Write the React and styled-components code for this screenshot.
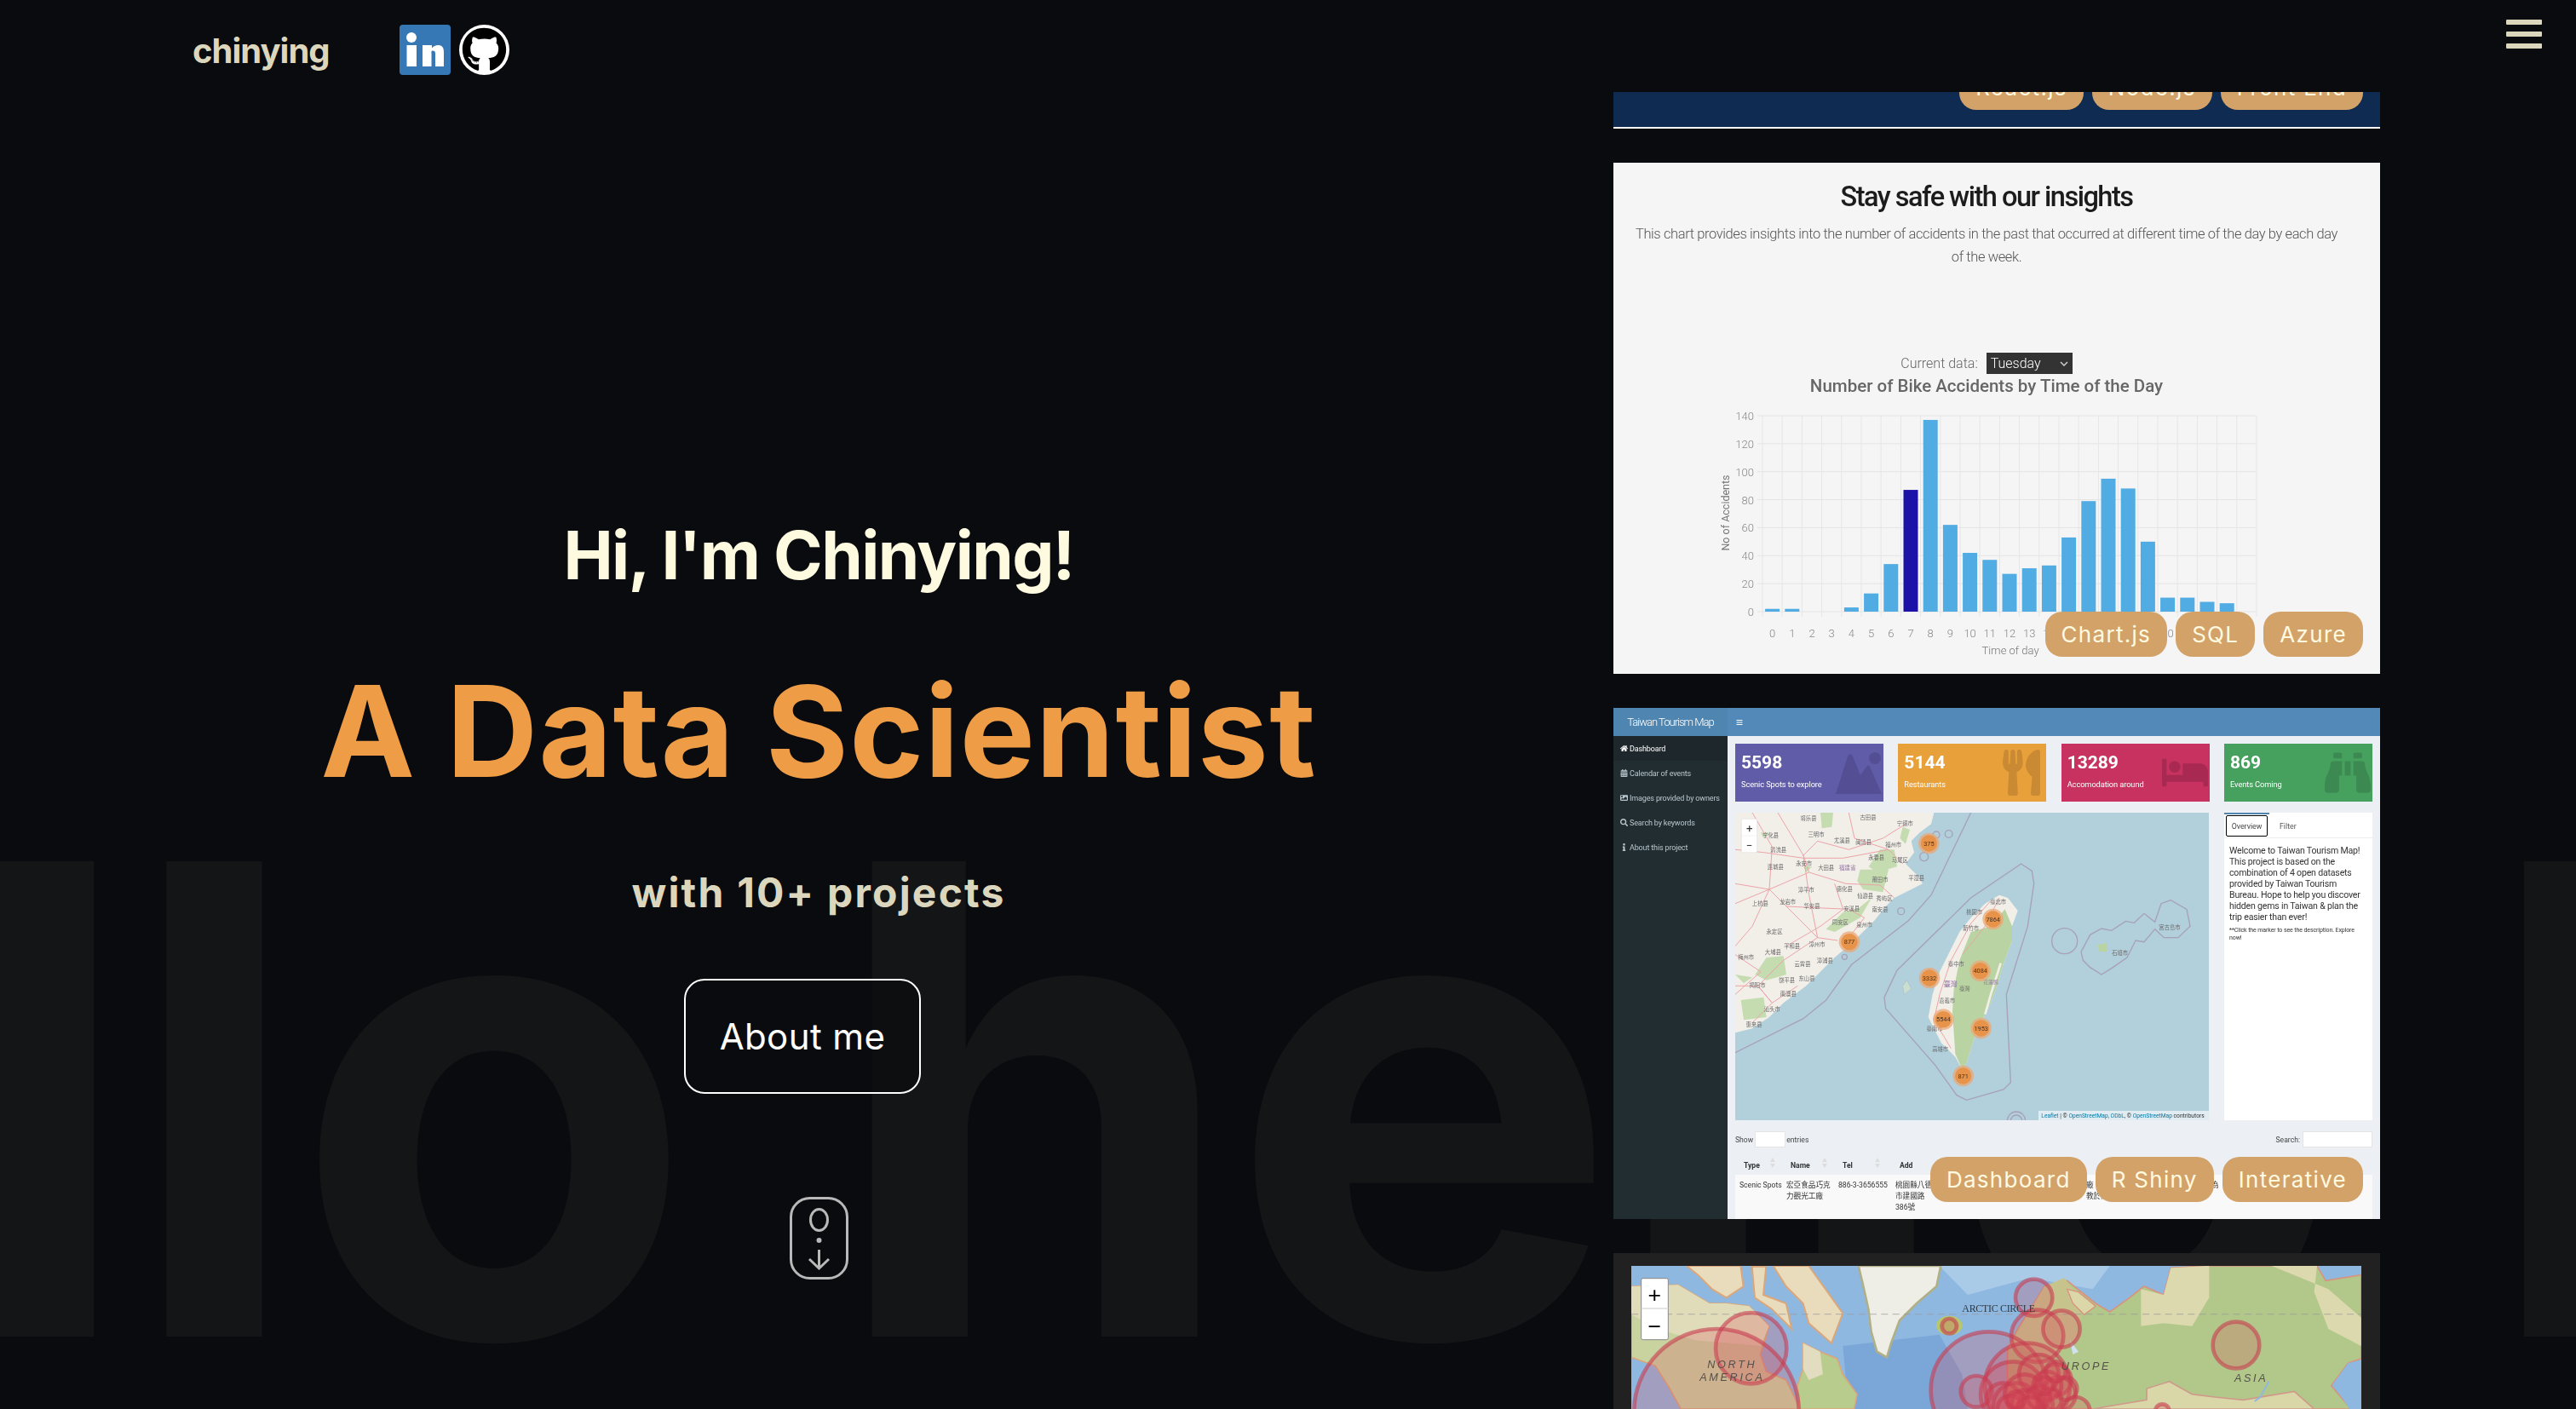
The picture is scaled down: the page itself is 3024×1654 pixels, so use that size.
import React from "react";
import styled, { createGlobalStyle } from "styled-components";
import { FaGithub, FaUtensils, FaBed, FaBinoculars, FaHome, FaCalendarAlt, FaImage, FaSearch, FaInfo, FaBars } from "react-icons/fa";

const Global = createGlobalStyle`
  html, body { margin: 0; padding: 0; background: #0a0b0e; }
  * { box-sizing: border-box; }
`;

const Page = styled.div`
  position: relative;
  width: 3024px;
  height: 1654px;
  overflow: hidden;
  background: #0a0b0e;
  font-family: Inter, "Liberation Sans", sans-serif;
  display: grid;
  grid-template-columns: 1894px 900px 230px;
`;
const BigText = styled.div`
  position: absolute;
  left: -50px;
  top: 907px;
  font-size: 767px;
  line-height: 1;
  font-weight: 700;
  letter-spacing: -10.5px;
  white-space: pre;
  color: #131517;
`;
const Nav = styled.header`
  position: absolute;
  top: 0; left: 0; right: 0;
  height: 108px;
  background: #0a0b0e;
  z-index: 5;
  display: flex;
  align-items: flex-start;
  padding: 29px 40px 0 226px;
`;
const Brand = styled.div`
  margin-top: 6px;
  font-size: 40px;
  line-height: 50px;
  font-weight: 700;
  letter-spacing: -1px;
  color: #dcd6bd;
  width: 243px;
`;
const Socials = styled.div`
  display: flex;
  gap: 10px;
`;
const GhRing = styled.div`
  width: 59px; height: 59px;
  border-radius: 50%;
  background: #fff;
  display: flex;
  align-items: center;
  justify-content: center;
  color: #000;
`;
const Burger = styled.div`
  margin-left: auto;
  margin-top: -6px;
  display: flex;
  flex-direction: column;
  gap: 8px;
  span { display: block; width: 42px; height: 6px; border-radius: 1px; background: #dcd6bd; }
`;
const Hero = styled.section`
  position: relative;
  z-index: 1;
  display: flex;
  flex-direction: column;
  align-items: center;
  padding: 613px 0 0 28px;
`;
const Hi = styled.h2`
  margin: 0;
  font-size: 78px;
  line-height: 78px;
  font-weight: 700;
  letter-spacing: -1.6px;
  color: #fefae0;
`;
const Title = styled.h1`
  margin: 94px 0 0;
  font-size: 148px;
  line-height: 148px;
  font-weight: 700;
  letter-spacing: 1.2px;
  color: #ee9c46;
`;
const Sub = styled.h3`
  margin: 91px 0 0;
  font-size: 48px;
  line-height: 48px;
  font-weight: 700;
  letter-spacing: 2.2px;
  color: #dcd6bd;
`;
const AboutBtn = styled.button`
  margin: 77px 38px 0 0;
  width: 278px;
  height: 135px;
  border: 2px solid #fff;
  border-radius: 24px;
  background: rgba(10, 11, 14, 0.7);
  color: #fff;
  font-family: inherit;
  font-size: 42px;
  font-weight: 400;
  letter-spacing: 0.4px;
`;
const MouseIcon = styled.svg`
  margin-top: 121px;
  display: block;
`;
const Column = styled.main`
  position: relative;
  z-index: 1;
  margin-top: -449px;
  display: flex;
  flex-direction: column;
  gap: 40px;
`;
const Card = styled.article`
  position: relative;
  width: 900px;
  height: 600px;
  flex: none;
  background: ${(p) => p.$bg};
  ${(p) => p.$line && "border-bottom: 2px solid #fff;"}
`;
const TagRow = styled.div`
  position: absolute;
  right: 20px;
  bottom: 20px;
  display: flex;
  gap: 10px;
  z-index: 2;
`;
const Tag = styled.span`
  height: 53px;
  padding: 0 19px;
  border-radius: 20px;
  background: #d3a269;
  color: #fefae0;
  font-size: 26px;
  line-height: 53px;
  letter-spacing: 1.3px;
  white-space: nowrap;
`;
const Shot = styled.div`
  width: 100%;
  height: 100%;
  overflow: hidden;
  filter: blur(0.45px);
  font-family: Roboto, "Liberation Sans", sans-serif;
`;
const SafeShot = styled(Shot)`
  display: flex;
  flex-direction: column;
  align-items: center;
  padding: 24px 24px 0 0;
`;
const SafeTitle = styled.div`
  font-size: 32.5px;
  line-height: 32px;
  font-weight: 500;
  letter-spacing: -1.5px;
  color: #1c1c1c;
`;
const SafePara = styled.p`
  margin: 14px 0 0;
  width: 830px;
  text-align: center;
  font-size: 16.5px;
  line-height: 27px;
  font-weight: 300;
  letter-spacing: -0.4px;
  color: #555;
`;
const DataRow = styled.div`
  margin-top: 99px;
  height: 25px;
  display: flex;
  align-items: center;
  gap: 10px;
  font-size: 16px;
  color: #666;
  font-weight: 300;
`;
const FakeSelect = styled.span`
  width: 101px;
  height: 25px;
  padding: 0 5px;
  background: #333;
  color: #fff;
  display: flex;
  align-items: center;
  justify-content: space-between;
  font-size: 16px;
`;
const ChartTitle = styled.div`
  margin-top: 2px;
  font-size: 20.5px;
  line-height: 24px;
  font-weight: 500;
  color: #666;
`;
const ChartSvg = styled.svg`
  margin-top: 4px;
  flex: none;
  display: block;
`;

const Dash = styled(Shot)`
  display: grid;
  grid-template-columns: 134px 1fr;
  grid-template-rows: 33px 1fr;
`;
const DashLogo = styled.div`
  background: #4f86b1;
  color: #fff;
  font-size: 13px;
  font-weight: 300;
  letter-spacing: -1px;
  line-height: 33px;
  text-align: center;
`;
const DashBar = styled.div`
  background: #5289b8;
  color: #fff;
  display: flex;
  align-items: center;
  padding-left: 10px;
`;
const Side = styled.nav`
  background: #222d32;
  color: #b8c7ce;
`;
const SideItem = styled.div`
  height: 29px;
  padding-left: 8px;
  display: flex;
  align-items: center;
  gap: 2px;
  font-size: 9px;
  letter-spacing: -0.15px;
  background: ${(p) => (p.$active ? "#1e282c" : "transparent")};
  color: ${(p) => (p.$active ? "#fff" : "#b8c7ce")};
`;
const DashMain = styled.div`
  background: #ecf0f5;
  padding: 9px 9px 0;
  overflow: hidden;
`;
const InfoRow = styled.div`
  display: grid;
  grid-template-columns: repeat(4, 174px);
  justify-content: space-between;
`;
const InfoBox = styled.div`
  position: relative;
  height: 68px;
  padding: 9px 7px;
  background: ${(p) => p.$bg};
  color: #fff;
  overflow: hidden;
`;
const InfoNum = styled.div`
  font-size: 21px;
  line-height: 26px;
  font-weight: 700;
`;
const InfoLabel = styled.div`
  margin-top: 6px;
  font-size: 9.3px;
  line-height: 14px;
  letter-spacing: -0.1px;
`;
const InfoIcon = styled.div`
  position: absolute;
  right: 2px;
  top: 7px;
  color: ${(p) => p.$c};
  line-height: 0;
`;
const MapRow = styled.div`
  margin-top: 13px;
  display: grid;
  grid-template-columns: 556px 174px;
  justify-content: space-between;
  height: 361px;
`;
const TabBox = styled.div`
  position: relative;
  background: #fff;
`;
const TabBlue = styled.div`
  width: 53px;
  height: 2px;
  background: #4f86b1;
`;
const TabHead = styled.div`
  height: 28px;
  display: flex;
  align-items: center;
  font-size: 8.8px;
  color: #555;
  border-bottom: 1px solid #eee;
  padding-left: 2px;
`;
const TabOn = styled.span`
  width: 49px;
  height: 25px;
  border: 1px solid #000;
  border-radius: 2px;
  display: flex;
  align-items: center;
  justify-content: center;
  margin-right: 14px;
  color: #444;
`;
const TabBody = styled.div`
  padding: 8px 5px 0 6px;
  font-size: 10.6px;
  line-height: 13px;
  letter-spacing: -0.2px;
  color: #333;
`;
const TabNote = styled.div`
  margin-top: 5px;
  font-size: 7px;
  line-height: 8.6px;
  letter-spacing: -0.1px;
`;
const Tools = styled.div`
  margin-top: 13px;
  height: 19px;
  display: flex;
  align-items: center;
  font-size: 8.6px;
  color: #444;
`;
const SelectBox = styled.span`
  width: 36px;
  height: 19px;
  margin: 0 1px 0 2px;
  background: #fff;
  border: 1px solid #e4e4e4;
`;
const SearchBox = styled.span`
  width: 82px;
  height: 19px;
  margin-left: 3px;
  background: #fff;
  border: 1px solid #e4e4e4;
`;
const Spacer = styled.span` flex: 1; `;
const TableGrid = styled.div`
  display: grid;
  grid-template-columns: 55px 61px 67px 224px 147px 1fr;
  padding: ${(p) => p.$pt || 0}px 0 0 5px;
  background: ${(p) => p.$bg || "transparent"};
  margin-top: ${(p) => p.$mt || 0}px;
  height: ${(p) => p.$h}px;
  font-size: ${(p) => p.$fs}px;
  font-weight: ${(p) => p.$w || 400};
  line-height: ${(p) => p.$lh}px;
  color: #333;
  font-family: Roboto, "Noto Sans CJK TC", sans-serif;
  overflow: hidden;
`;
const HeadCell = styled.span`
  padding-left: 5px;
`;

const WorldFrame = styled.div`
  padding: 15px 22px 0 21px;
  height: 100%;
  filter: blur(0.5px);
`;
const Fill = styled.svg`
  display: block;
`;

const bars = [2, 2, 0, 0, 3, 13, 34, 87, 137, 62, 42, 37, 27, 31, 33, 53, 79, 95, 88, 50, 10, 10, 7, 6];

function Chart() {
  const x0 = 175, y0 = 249, slot = 23.2, unit = 230 / 140;
  return (
    <ChartSvg width="876" height="310" viewBox="0 0 876 310" fontFamily="Roboto, sans-serif">
      {[0, 20, 40, 60, 80, 100, 120, 140].map((v) => (
        <g key={v}>
          <line x1={x0 - 6} x2={x0 + slot * 25} y1={y0 - v * unit} y2={y0 - v * unit} stroke="#e4e4e4" />
          <text x={x0 - 10} y={y0 - v * unit + 5} textAnchor="end" fontSize="13" fill="#888" fontWeight="300">{v}</text>
        </g>
      ))}
      {Array.from({ length: 26 }, (_, i) => (
        <line key={i} x1={x0 + i * slot} x2={x0 + i * slot} y1={y0 - 230} y2={y0 + 6} stroke="#e6e6e6" />
      ))}
      {bars.map((v, i) => (
        <rect key={i} x={x0 + i * slot + 3.1} y={y0 - v * unit} width="17" height={v * unit} fill={i === 7 ? "#1d12a8" : "#52ace4"} />
      ))}
      {Array.from({ length: 25 }, (_, i) => (
        <text key={i} x={x0 + i * slot + 11.6} y={y0 + 30} textAnchor="middle" fontSize="13" fill="#888" fontWeight="300">{i}</text>
      ))}
      <text x="466" y="299" textAnchor="middle" fontSize="13" fill="#777" fontWeight="300">Time of day</text>
      <text transform="translate(136,133) rotate(-90)" textAnchor="middle" fontSize="12.5" fill="#777">No of Accidents</text>
    </ChartSvg>
  );
}

const clusters = [
  [908, 375, "7864"], [402, 455, "877"], [682, 108, "375"], [863, 557, "4084"],
  [684, 582, "3332"], [733, 728, "5544"], [866, 759, "1953"], [803, 927, "871"],
];
const cityLabels = [
  ["宁德市", 598, 46], ["三明市", 285, 83], ["福州市", 557, 121], ["莆田市", 510, 244], ["泉州市", 455, 401],
  ["漳州市", 288, 470], ["龙岩市", 185, 320], ["揭阳市", 78, 616], ["汕头市", 130, 698], ["梅州市", 38, 515],
  ["马尾区", 580, 173], ["永春县", 497, 165], ["大田县", 320, 200], ["永安市", 242, 185], ["德化县", 385, 275],
  ["仙游县", 458, 300], ["安溪县", 410, 345], ["同安区", 370, 392], ["南安县", 510, 348], ["平和县", 200, 478],
  ["大埔县", 133, 499], ["云霄县", 237, 541], ["漳浦县", 316, 527], ["东山县", 252, 590], ["饶平县", 182, 598],
  ["南澳县", 187, 645], ["惠来县", 66, 754], ["上杭县", 88, 327], ["漳平市", 250, 280], ["华安县", 270, 336],
  ["连城县", 142, 197], ["清流县", 152, 138], ["宁化县", 125, 87], ["尤溪县", 376, 106], ["闽清县", 452, 112],
  ["将乐县", 258, 27], ["古田县", 468, 24], ["平潭县", 638, 238], ["永定区", 138, 425], ["秀屿区", 525, 308],
  ["臺北市", 926, 322], ["桃園市", 842, 357], ["新竹市", 830, 413], ["臺中市", 778, 540], ["嘉義市", 746, 668],
  ["臺南市", 702, 768], ["高雄市", 722, 840], ["臺灣", 808, 627], ["石垣市", 1355, 500], ["宮古島市", 1530, 410],
];
const roads = [
  "M0 320L120 270L260 210L240 150L290 100L400 130L520 90L600 40",
  "M0 130L100 140L240 160L380 160L540 130",
  "M120 270L180 330L290 440L360 450",
  "M60 0L130 120L120 270L60 400L0 470",
  "M290 440L170 520L80 610L130 670L60 740",
  "M260 210L390 250L510 255L560 300",
  "M180 330L400 340L455 370L400 440",
  "M0 610L80 610L130 670L220 610",
  "M150 0L240 150L260 290L290 440",
  "M400 0L420 90L540 130L590 180",
  "M0 250L120 270M0 500L90 560L0 640",
  "M350 250L380 340L300 400L180 470",
];

function TaiwanMap() {
  return (
    <Fill width="556" height="361" viewBox="0 0 1668 1083" fontFamily="'Noto Sans CJK SC', sans-serif">
      <rect width="1668" height="1083" fill="#b1d0dc" />
      <path d="M0 0L700 0L690 40L650 70L620 100L630 140L600 180L640 220L660 250L620 270L560 300L530 330L490 380L440 430L410 460L350 510L300 560L250 610L210 640L170 670L120 720L60 760L0 775Z" fill="#f2efe9" />
      <path d="M300 0L345 0L340 50L305 55ZM590 50L615 60L600 110L580 90ZM510 130L560 130L570 190L500 210L470 190ZM440 200L540 200L520 280L450 270L430 240ZM380 350L430 340L480 300L440 370L350 420L320 410ZM110 510L170 505L180 570L110 590L70 570ZM20 660L100 650L110 720L30 730ZM0 570L60 580L30 600ZM90 70L120 70L100 90ZM240 190L270 190L250 210Z" fill="#c4dcb0" />
      <g fill="none" stroke="#eda3a8" strokeWidth="3">{roads.map((d) => <path key={d} d={d} />)}</g>
      <path d="M930 290L960 300L995 345L975 400L975 450L945 530L925 600L900 670L870 730L840 800L815 880L800 905L775 860L725 810L680 720L695 640L720 560L745 510L790 420L830 370L880 320Z" fill="#f2efe9" />
      <path d="M950 340L975 400L975 450L945 530L925 600L900 670L870 730L840 800L815 880L800 905L775 850L765 700L770 620L790 520L830 420L900 400Z" fill="#b9d4a2" />
      <path d="M935 530L900 640L880 710" stroke="#f2efe9" strokeWidth="8" fill="none" />
      <g fill="none" stroke="#eda3a8" strokeWidth="3"><path d="M900 310L830 390L760 520L720 640L700 730L760 830" /><path d="M930 300L880 400L800 500" /></g>
      <g fill="none" stroke="#a7a0ba" strokeWidth="4">
        <path d="M830 0L690 290L610 380L410 535L320 660L240 725L0 845" />
        <path d="M1007 180L1045 205L1052 250L1030 400L955 640L970 950L945 975L815 1012L780 995L705 890L530 690L525 650L570 555L830 300Z" />
        <circle cx="708" cy="78" r="12" /><circle cx="752" cy="75" r="13" /><circle cx="665" cy="155" r="15" />
        <circle cx="584" cy="347" r="12" /><circle cx="385" cy="508" r="9" /><circle cx="1160" cy="452" r="45" />
        <path d="M1250 545L1225 520L1218 490L1250 430L1290 408L1325 415L1375 382L1405 388L1440 355L1478 385L1500 320L1534 308L1590 340L1602 400L1560 440L1510 440L1478 410L1440 455L1410 450L1380 510L1330 545L1290 570Z" />
        <circle cx="990" cy="1085" r="32" /><circle cx="990" cy="1085" r="20" />
      </g>
      <path d="M1275 465L1310 460L1310 490L1280 488Z" fill="#b9d4a2" />
      <path d="M605 590L620 620L595 640L590 610Z" fill="#c9dfd0" stroke="#a7a0ba" />
      <g fontSize="19" fill="#6a6a6a" textAnchor="middle">
        {cityLabels.map(([t, x, y]) => <text key={t} x={x} y={y}>{t}</text>)}
      </g>
      <text x="395" y="200" fontSize="20" fill="#9a7fa8" textAnchor="middle">福建省</text>
      <text x="758" y="612" fontSize="24" fill="#8a6a9e" textAnchor="middle">臺灣</text>
      <text x="900" y="602" fontSize="18" fill="#9a7fa8" textAnchor="middle">花蓮縣</text>
      {clusters.map(([x, y, t]) => (
        <g key={t}>
          <circle cx={x} cy={y} r="37" fill="#e9a878" fillOpacity="0.75" />
          <circle cx={x} cy={y} r="29" fill="#e8934a" />
          <text x={x} y={y + 8} fontSize="22" fontFamily="Roboto, sans-serif" fill="#4a3320" textAnchor="middle">{t}</text>
        </g>
      ))}
      <rect x="22" y="22" width="55" height="118" rx="4" fill="#fff" stroke="#ccc" />
      <line x1="22" x2="77" y1="81" y2="81" stroke="#ddd" />
      <text x="50" y="70" fontSize="40" textAnchor="middle" fontFamily="Roboto, sans-serif" fill="#333">+</text>
      <text x="50" y="128" fontSize="40" textAnchor="middle" fontFamily="Roboto, sans-serif" fill="#333">−</text>
      <rect x="1068" y="1050" width="600" height="33" fill="#fff" fillOpacity="0.6" />
      <text x="1078" y="1075" fontSize="20" fontFamily="Roboto, sans-serif" fill="#0078a8">Leaflet<tspan fill="#333"> | © </tspan>OpenStreetMap, ODbL<tspan fill="#333">, © </tspan>OpenStreetMap<tspan fill="#333"> contributors</tspan></text>
    </Fill>
  );
}

const rings = [
  [437, 308, 125], [315, 530, 290], [1135, 230, 26],
  [1433, 130, 65], [1445, 265, 92], [1530, 240, 65], [1275, 455, 205], [1410, 440, 150], [1360, 470, 115],
  [1230, 460, 55], [1325, 490, 60], [1510, 420, 55], [1545, 450, 40], [1450, 400, 70], [1370, 510, 80],
  [1440, 510, 60], [1520, 470, 60], [1580, 530, 50], [1885, 530, 25], [2145, 297, 82], [1400, 470, 70], [1480, 440, 50],
  [1350, 520, 45], [1400, 500, 45], [1450, 480, 40], [1490, 490, 40], [1420, 530, 50], [1510, 390, 35], [1370, 490, 30], [1470, 440, 30],
];

function WorldMap() {
  return (
    <Fill width="857" height="168" viewBox="15 18 2571 504" fontFamily="'Liberation Serif', serif">
      <rect x="15" y="18" width="2571" height="504" fill="#8fb8e0" />
      <path d="M760 300L1100 260L1180 400L1200 522L780 522Z" fill="#7ba6d8" />
      <path d="M1100 18L1700 18L1640 100L1420 60L1200 120Z" fill="#a9cbe8" />
      <path d="M15 90L180 85L290 150L350 150L430 160L500 230L470 330L490 390L560 420L610 522L190 522L150 450L100 370L15 340Z" fill="#c9d3a0" stroke="#dba77a" strokeWidth="5" />
      <path d="M15 90L180 85L290 150L350 150L430 160L500 230L470 300L240 280L110 240L15 190Z" fill="#e0dbb8" />
      <path d="M620 290L680 320L740 345L760 400L810 470L800 522L610 522L600 440L620 380Z" fill="#b8cc8e" stroke="#dba77a" strokeWidth="5" />
      <path d="M620 290L680 320L690 400L640 420L620 380Z" fill="#e2dcc0" />
      <path d="M210 18L400 18L410 90L350 130L300 100L250 50ZM440 20L490 20L480 120L560 150L580 240L510 170L450 130ZM515 18L640 18L760 185L720 290L640 220L620 150L560 90Z" fill="#e8dcbc" stroke="#dba77a" strokeWidth="6" />
      <path d="M815 18L1105 18L1090 90L1020 150L960 210L930 290L915 340L880 320L860 250L850 170L830 80Z" fill="#efeee6" stroke="#b0b088" strokeWidth="8" />
      <ellipse cx="1135" cy="228" rx="46" ry="34" fill="#b7c76e" />
      <g transform="translate(1170 0)">
        <path d="M170 310L200 250L300 90L380 70L480 150L530 180L600 130L650 90L720 120L745 25L860 18L1260 18L1290 70L1415 50L1415 345L1370 360L1310 440L1380 522L170 522Z" fill="#b2c88a" stroke="#d8937f" strokeWidth="5" />
        <path d="M640 100L720 120L745 25L880 18L880 130L820 230L720 220L640 230Z M1100 18L1260 18L1250 110L1300 240L1415 300L1415 200L1300 100Z" fill="#dcd9ae" />
        <path d="M180 300L240 190L300 90L370 60L400 100L420 110L430 200L410 280L330 340Z" fill="#c6c48c" />
        <path d="M380 100L420 110L480 160L440 190L400 150Z" fill="#dcd7a8" stroke="#d8937f" strokeWidth="4" />
        <path d="M1415 350L1370 360L1315 435L1375 522L1415 522Z" fill="#8fb8e0" />
        <path d="M470 522L540 510L660 490L660 450L740 425L820 470L900 480L1000 490L1180 460L1250 522Z" fill="#d9d6a8" stroke="#cf9a8a" strokeWidth="5" />
        <path d="M390 280L400 330L420 320Z" fill="#cfe0f0" />
        <path d="M1090 425L1060 480L1040 495" stroke="#8fb8e0" strokeWidth="6" fill="none" />
      </g>
      <line x1="15" x2="2586" y1="188" y2="188" stroke="#999" strokeOpacity="0.6" strokeWidth="4" strokeDasharray="24 16" />
      <g fill="rgba(215,80,90,0.25)" stroke="rgba(200,60,80,0.6)" strokeWidth="14">
        {rings.map(([x, y, r], i) => <circle key={i} cx={x} cy={y} r={r} />)}
      </g>
      <text x="1180" y="180" fontSize="36" fill="#2f3a44" letterSpacing="-1">ARCTIC CIRCLE</text>
      <g fontSize="38" fontStyle="italic" fill="#55504c" textAnchor="middle" letterSpacing="8" fontFamily="'Liberation Sans', sans-serif">
        <text x="370" y="378">NORTH</text>
        <text x="370" y="422">AMERICA</text>
        <text x="1617" y="383">UROPE</text>
        <text x="2198" y="425">ASIA</text>
      </g>
      <rect x="50" y="62" width="95" height="216" rx="6" fill="#fff" stroke="#888" strokeWidth="3" />
      <line x1="50" x2="145" y1="168" y2="168" stroke="#ddd" strokeWidth="4" />
      <text x="97" y="148" fontSize="80" textAnchor="middle" fontFamily="'Liberation Sans', sans-serif" fill="#000">+</text>
      <text x="97" y="258" fontSize="80" textAnchor="middle" fontFamily="'Liberation Sans', sans-serif" fill="#000">−</text>
    </Fill>
  );
}

const Mountain = () => (
  <svg width="54" height="54" viewBox="0 0 54 54" fill="#544f94">
    <path d="M0 52L14 8Q17 2 20 8L29 30L36 20Q38 17 40 20L54 52Z" />
    <circle cx="46" cy="10" r="7" />
  </svg>
);

const infos = [
  { n: "5598", l: "Scenic Spots to explore", bg: "#605ca8", c: "#544f94", icon: <Mountain /> },
  { n: "5144", l: "Restaurants", bg: "#e8a03b", c: "#c98a33", icon: <FaUtensils size={54} /> },
  { n: "13289", l: "Accomodation around", bg: "#c73260", c: "#a82a52", icon: <FaBed size={54} /> },
  { n: "869", l: "Events Coming", bg: "#46a15f", c: "#3c8a52", icon: <FaBinoculars size={54} /> },
];
const menu = [
  [FaHome, "Dashboard"], [FaCalendarAlt, "Calendar of events"], [FaImage, "Images provided by owners"],
  [FaSearch, "Search by keywords"], [FaInfo, "About this project"],
];
const sortArrow = (x) => (
  <svg width="6" height="12" viewBox="0 0 6 12" style={{ marginLeft: x }} fill="#ddd"><path d="M3 0L6 5H0ZM3 12L0 7H6Z" /></svg>
);

export default function App() {
  return (
    <Page>
      <Global />
      <BigText>llo hello h</BigText>
      <Nav>
        <Brand>chinying</Brand>
        <Socials>
          <svg width="60" height="59" viewBox="0 0 60 59">
            <rect width="60" height="59" rx="4" fill="#3677b5" />
            <circle cx="14" cy="15" r="6" fill="#fff" />
            <rect x="8.5" y="24" width="11.5" height="25" fill="#fff" />
            <path d="M27 24H38V27.5C40 25 43 23.5 46 24C50.5 24.500 52 27.500 52 32V49H42V34C42 31.500 41 30.500 39 30.500C37 30.500 37.500 32 37.500 34V49H27Z" fill="#fff" />
          </svg>
          <GhRing><FaGithub size={53} /></GhRing>
        </Socials>
        <Burger><span /><span /><span /></Burger>
      </Nav>
      <Hero>
        <Hi>Hi, I'm Chinying!</Hi>
        <Title>A Data Scientist</Title>
        <Sub>with 10+ projects</Sub>
        <AboutBtn>About me</AboutBtn>
        <MouseIcon width="69" height="97" viewBox="0 0 69 97" fill="none" stroke="#b9b9b9" strokeWidth="3">
          <rect x="1.500" y="1.500" width="66" height="94" rx="22" />
          <ellipse cx="34.500" cy="27" rx="10" ry="12.500" />
          <circle cx="34.500" cy="51" r="1.500" fill="#b9b9b9" />
          <path d="M34.500 62V84M23 73L34.500 84L46 73" />
        </MouseIcon>
      </Hero>
      <Column>
        <Card $bg="#0f2b52" $line>
          <TagRow><Tag>React.js</Tag><Tag>Node.js</Tag><Tag>Front End</Tag></TagRow>
        </Card>
        <Card $bg="#f5f5f5">
          <SafeShot>
            <SafeTitle>Stay safe with our insights</SafeTitle>
            <SafePara>This chart provides insights into the number of accidents in the past that occurred at different time of the day by each day of the week.</SafePara>
            <DataRow>Current data:<FakeSelect>Tuesday<svg width="10" height="6" viewBox="0 0 10 6" fill="none" stroke="#ccc" strokeWidth="1.500"><path d="M1 1L5 5L9 1" /></svg></FakeSelect></DataRow>
            <ChartTitle>Number of Bike Accidents by Time of the Day</ChartTitle>
            <Chart />
          </SafeShot>
          <TagRow><Tag>Chart.js</Tag><Tag>SQL</Tag><Tag>Azure</Tag></TagRow>
        </Card>
        <Card $bg="#ecf0f5">
          <Dash>
            <DashLogo>Taiwan Tourism Map</DashLogo>
            <DashBar><FaBars size={8} /></DashBar>
            <Side>
              {menu.map(([I, t], i) => (
                <SideItem key={t} $active={i === 0}><I size={9} />{t}</SideItem>
              ))}
            </Side>
            <DashMain>
              <InfoRow>
                {infos.map((b) => (
                  <InfoBox key={b.n} $bg={b.bg}>
                    <InfoNum>{b.n}</InfoNum>
                    <InfoLabel>{b.l}</InfoLabel>
                    <InfoIcon $c={b.c}>{b.icon}</InfoIcon>
                  </InfoBox>
                ))}
              </InfoRow>
              <MapRow>
                <TaiwanMap />
                <TabBox>
                  <TabBlue />
                  <TabHead><TabOn>Overview</TabOn>Filter</TabHead>
                  <TabBody>
                    Welcome to Taiwan Tourism Map! This project is based on the combination of 4 open datasets provided by Taiwan Tourism Bureau. Hope to help you discover hidden gems in Taiwan &amp; plan the trip easier than ever!
                    <TabNote>**Click the marker to see the description. Explore now!</TabNote>
                  </TabBody>
                </TabBox>
              </MapRow>
              <Tools>
                Show<SelectBox />entries<Spacer />Search:<SearchBox />
              </Tools>
              <TableGrid $mt={10} $h={22} $fs={8.6} $w={700} $lh={22}>
                <HeadCell>Type{sortArrow(12)}</HeadCell>
                <HeadCell>Name{sortArrow(14)}</HeadCell>
                <HeadCell>Tel{sortArrow(26)}</HeadCell>
                <HeadCell>Add</HeadCell>
              </TableGrid>
              <TableGrid $bg="#f9f9f9" $h={52} $pt={6} $fs={8.6} $lh={13}>
                <span>Scenic Spots</span>
                <span>宏亞食品巧克<br />力觀光工廠</span>
                <span>886-3-3656555</span>
                <span>桃園縣八德<br />市建國路<br />386號</span>
                <span>廠<br />教於樂</span>
                <span>為</span>
              </TableGrid>
            </DashMain>
          </Dash>
          <TagRow><Tag>Dashboard</Tag><Tag>R Shiny</Tag><Tag>Interative</Tag></TagRow>
        </Card>
        <Card $bg="#212121">
          <WorldFrame><WorldMap /></WorldFrame>
        </Card>
      </Column>
    </Page>
  );
}
